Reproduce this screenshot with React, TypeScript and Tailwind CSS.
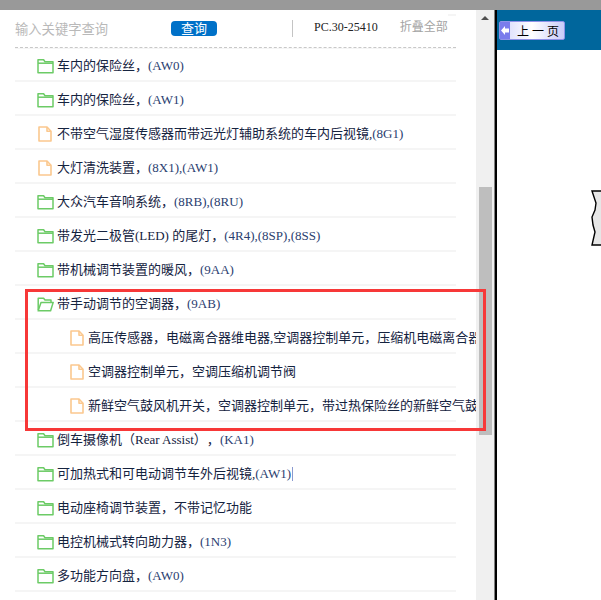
// App.tsx
const serif = 'font-["Liberation_Serif","Noto_Sans_CJK_SC",serif]';

type Row = { text: string; code?: string; open?: boolean; file?: boolean; sub?: boolean; caret?: boolean };

const rows: Row[] = [
  { text: '车内的保险丝，', code: '(AW0)' },
  { text: '车内的保险丝，', code: '(AW1)' },
  { text: '不带空气湿度传感器而带远光灯辅助系统的车内后视镜,', code: '(8G1)', file: true },
  { text: '大灯清洗装置，', code: '(8X1),(AW1)', file: true },
  { text: '大众汽车音响系统，', code: '(8RB),(8RU)' },
  { text: '带发光二极管(LED) 的尾灯，', code: '(4R4),(8SP),(8SS)' },
  { text: '带机械调节装置的暖风，', code: '(9AA)' },
  { text: '带手动调节的空调器，', code: '(9AB)', open: true },
  { text: '高压传感器，电磁离合器维电器,空调器控制单元，压缩机电磁离合器，空调压缩机调节阀', file: true, sub: true },
  { text: '空调器控制单元，空调压缩机调节阀', file: true, sub: true },
  { text: '新鲜空气鼓风机开关，空调器控制单元，带过热保险丝的新鲜空气鼓风机', file: true, sub: true },
  { text: '倒车摄像机（Rear Assist），', code: '(KA1)' },
  { text: '可加热式和可电动调节车外后视镜,', code: '(AW1)', caret: true },
  { text: '电动座椅调节装置，不带记忆功能' },
  { text: '电控机械式转向助力器，', code: '(1N3)' },
  { text: '多功能方向盘，', code: '(AW0)' },
];

function FolderIcon({ open }: { open?: boolean }) {
  return (
    <svg className="h-[16px] w-[17px] shrink-0" viewBox="0 0 17 16" fill="none" stroke="#6ccb66" strokeWidth="1.5" strokeLinejoin="round">
      {open ? (
        <>
          <path d="M1.2 14V2.2h5.4l1.4 1.8h6v2.4" />
          <path d="M1.2 14.8h12.4l2.6-8.4H4z" />
        </>
      ) : (
        <>
          <path d="M1 1.8h5.6l1.4 2h8v11H1z" />
          <path d="M1 5.2h15" />
        </>
      )}
    </svg>
  );
}

function FileIcon() {
  return (
    <svg className="h-[16px] w-[14px] shrink-0" viewBox="0 0 14 16" fill="none" stroke="#fbc88e" strokeWidth="1.6" strokeLinejoin="round">
      <path d="M1 1h8l4 4.2V15H1z" />
      <path d="M9 1v4.2h4" />
    </svg>
  );
}

function ListRow({ row }: { row: Row }) {
  const indent = row.sub ? 'pl-[55px]' : row.file ? 'pl-[23px]' : 'pl-[22px]';
  const gap = row.sub ? 'ml-[4px]' : row.file ? 'ml-[5px]' : 'ml-[3px]';
  return (
    <div
      className={`flex h-[34px] items-center whitespace-nowrap border-b-2 border-[#f5f5f5] pt-[3px] text-[13px] text-[#15233f] [text-spacing-trim:space-all] first:border-t first:pt-[2px] ${indent}`}
    >
      {row.file ? <FileIcon /> : <FolderIcon open={row.open} />}
      <span className={gap}>{row.text}</span>
      {row.code && <span className="text-[#2a4070]">{row.code}</span>}
      {row.caret && <span className="ml-[1px] h-[14px] w-px bg-[#8a9ad0]" />}
    </div>
  );
}

export default function App() {
  return (
    <div className={`relative flex h-[600px] w-[601px] flex-col overflow-hidden bg-white ${serif}`}>
      <div className="h-[10px] shrink-0 bg-[#999999]" />
      <div className="flex min-h-0 flex-1">
        {/* left list */}
        <div className="w-[476px] shrink-0 overflow-hidden pl-[15px]">
          <div className="w-[441px]">
            <div className="flex h-[38px] items-center whitespace-nowrap border-b border-dashed border-[#c8c8c8] text-[13px]">
              <span className="mt-[3px] w-[156px] text-[13.3px] text-[#b9b9b9]">输入关键字查询</span>
              <button className="h-[15px] w-[46px] rounded-[4px] bg-[#0071c8] text-[13px] leading-[15px] text-white">查询</button>
              <span className="ml-[75px] h-[17px] w-px bg-[#c4c4c4]" />
              <span className="mb-[4px] ml-[21px] text-[12px] text-[#222222]">PC.30-25410</span>
              <span className="mb-[4px] ml-[22px] text-[12px] text-[#a3a3a3]">折叠全部</span>
              <span className="mb-auto ml-auto mt-[4px] h-[2px] w-[8px] bg-[#f5f5f5]" />
            </div>
            <div>
              {rows.map((row, i) => (
                <ListRow key={i} row={row} />
              ))}
            </div>
          </div>
        </div>

        {/* scrollbar */}
        <div className="flex w-[18px] shrink-0 flex-col items-center bg-[#f0f0f0] pt-[6px]">
          <div className="h-0 w-0 border-x-[4px] border-b-[4px] border-x-transparent border-b-[#505050]" />
          <div className="mt-[167px] h-[248px] w-[13px] bg-[#bebebe]" />
        </div>
        <div className="w-[1px] shrink-0 bg-[#808080]" />
        <div className="w-[2px] shrink-0 bg-black" />

        {/* right page */}
        <div className="min-w-0 flex-1">
          <div className="flex h-[40px] items-start bg-[#00669c] pl-[2px] pt-[11px]">
            <div className="flex h-[19px] w-[66px] items-center rounded-[2px] border border-[#8f92e8] bg-gradient-to-r from-[#d4d6fb] via-white to-[#c9cbf8]">
              <div className="flex h-full w-[10px] items-center justify-center bg-[#7a7cec]">
                <svg className="h-[9px] w-[8px]" viewBox="0 0 8 9" fill="white">
                  <path d="M0 4.5 4 0v2.5h4v4H4V9z" />
                </svg>
              </div>
              <span className="ml-[7px] font-['Noto_Sans_CJK_SC',sans-serif] text-[12px] leading-none tracking-[3px] text-black">上一页</span>
            </div>
          </div>
          <svg className="ml-[94px] mt-[139px] h-[58px] w-[10px]" viewBox="0 0 10 58" fill="#e6e6e6" stroke="black" strokeWidth="1.4">
            <path d="M1 2 5 14 4 21 1 28 2 36 4 43 1 56H12V2z" />
          </svg>
        </div>
      </div>

      {/* red highlight */}
      <div className="pointer-events-none absolute left-[25px] top-[289px] h-[142px] w-[461px] border-[3px] border-[#f73838]" />
    </div>
  );
}
